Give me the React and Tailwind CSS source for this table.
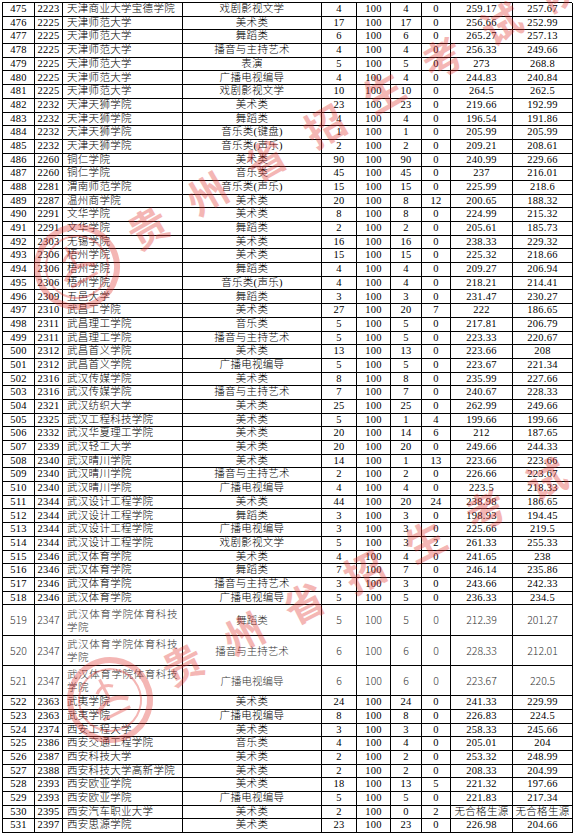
import React from "react";

const R = [
  [475, 2223, "天津商业大学宝德学院", "戏剧影视文学", "4", "100", "4", "0", "259.17", "257.67"],
  [476, 2225, "天津师范大学", "美术类", "17", "100", "17", "0", "256.66", "252.99"],
  [477, 2225, "天津师范大学", "舞蹈类", "6", "100", "6", "0", "265.27", "257.13"],
  [478, 2225, "天津师范大学", "播音与主持艺术", "4", "100", "4", "0", "256.33", "249.66"],
  [479, 2225, "天津师范大学", "表演", "5", "100", "5", "0", "273", "268.8"],
  [480, 2225, "天津师范大学", "广播电视编导", "4", "100", "4", "0", "244.83", "240.84"],
  [481, 2225, "天津师范大学", "戏剧影视文学", "10", "100", "10", "0", "264.5", "262.5"],
  [482, 2232, "天津天狮学院", "美术类", "23", "100", "23", "0", "219.66", "192.99"],
  [483, 2232, "天津天狮学院", "舞蹈类", "4", "100", "4", "0", "196.54", "191.86"],
  [484, 2232, "天津天狮学院", "音乐类(键盘)", "1", "100", "1", "0", "205.99", "205.99"],
  [485, 2232, "天津天狮学院", "音乐类(声乐)", "2", "100", "2", "0", "209.21", "208.61"],
  [486, 2260, "铜仁学院", "美术类", "90", "100", "90", "0", "240.99", "229.66"],
  [487, 2260, "铜仁学院", "音乐类", "45", "100", "45", "0", "237", "216.01"],
  [488, 2281, "渭南师范学院", "音乐类(声乐)", "15", "100", "15", "0", "225.99", "218.6"],
  [489, 2287, "温州商学院", "美术类", "20", "100", "8", "12", "200.65", "188.32"],
  [490, 2291, "文华学院", "美术类", "8", "100", "8", "0", "224.99", "215.32"],
  [491, 2291, "文华学院", "舞蹈类", "2", "100", "2", "0", "205.61", "185.73"],
  [492, 2303, "无锡学院", "美术类", "16", "100", "16", "0", "238.33", "229.32"],
  [493, 2306, "梧州学院", "美术类", "15", "100", "15", "0", "225.32", "218.66"],
  [494, 2306, "梧州学院", "舞蹈类", "4", "100", "4", "0", "209.27", "206.94"],
  [495, 2306, "梧州学院", "音乐类(声乐)", "4", "100", "4", "0", "218.21", "214.41"],
  [496, 2309, "五邑大学", "舞蹈类", "3", "100", "3", "0", "231.47", "230.27"],
  [497, 2310, "武昌工学院", "美术类", "27", "100", "20", "7", "222", "186.65"],
  [498, 2311, "武昌理工学院", "音乐类", "5", "100", "5", "0", "217.81", "206.79"],
  [499, 2311, "武昌理工学院", "播音与主持艺术", "5", "100", "5", "0", "223.33", "220.67"],
  [500, 2312, "武昌首义学院", "美术类", "13", "100", "13", "0", "223.66", "208"],
  [501, 2312, "武昌首义学院", "广播电视编导", "5", "100", "5", "0", "223.67", "221.34"],
  [502, 2316, "武汉传媒学院", "美术类", "8", "100", "8", "0", "235.99", "227.66"],
  [503, 2316, "武汉传媒学院", "播音与主持艺术", "7", "100", "7", "0", "240.67", "228.33"],
  [504, 2321, "武汉纺织大学", "美术类", "25", "100", "25", "0", "262.99", "249.66"],
  [505, 2325, "武汉工程科技学院", "美术类", "5", "100", "1", "4", "199.66", "199.66"],
  [506, 2332, "武汉华夏理工学院", "美术类", "20", "100", "14", "6", "212", "187.65"],
  [507, 2339, "武汉轻工大学", "美术类", "20", "100", "20", "0", "249.66", "244.33"],
  [508, 2340, "武汉晴川学院", "美术类", "14", "100", "1", "13", "223.66", "223.66"],
  [509, 2340, "武汉晴川学院", "播音与主持艺术", "2", "100", "2", "0", "226.66", "223.67"],
  [510, 2340, "武汉晴川学院", "广播电视编导", "4", "100", "4", "0", "223.5", "218.33"],
  [511, 2344, "武汉设计工程学院", "美术类", "44", "100", "20", "24", "238.98", "186.65"],
  [512, 2344, "武汉设计工程学院", "舞蹈类", "3", "100", "3", "0", "198.93", "194.45"],
  [513, 2344, "武汉设计工程学院", "广播电视编导", "3", "100", "3", "0", "225.66", "219.5"],
  [514, 2344, "武汉设计工程学院", "戏剧影视文学", "5", "100", "3", "2", "261.33", "255.33"],
  [515, 2346, "武汉体育学院", "美术类", "4", "100", "4", "0", "241.65", "238"],
  [516, 2346, "武汉体育学院", "舞蹈类", "7", "100", "7", "0", "246.14", "235.86"],
  [517, 2346, "武汉体育学院", "播音与主持艺术", "3", "100", "3", "0", "243.66", "242.33"],
  [518, 2346, "武汉体育学院", "广播电视编导", "5", "100", "5", "0", "236.33", "234.5"],
  [519, 2347, "TALL", "舞蹈类", "5", "100", "5", "0", "212.39", "201.27"],
  [520, 2347, "TALL", "播音与主持艺术", "6", "100", "6", "0", "228.33", "212.01"],
  [521, 2347, "TALL", "广播电视编导", "6", "100", "6", "0", "223.67", "220.5"],
  [522, 2363, "武夷学院", "美术类", "24", "100", "24", "0", "241.33", "229.99"],
  [523, 2363, "武夷学院", "广播电视编导", "8", "100", "8", "0", "226.83", "224.5"],
  [524, 2374, "西安工程大学", "美术类", "3", "100", "3", "0", "258.33", "245.66"],
  [525, 2386, "西安交通工程学院", "音乐类", "4", "100", "4", "0", "205.01", "204"],
  [526, 2387, "西安科技大学", "美术类", "2", "100", "2", "0", "253.32", "248.99"],
  [527, 2388, "西安科技大学高新学院", "美术类", "2", "100", "2", "0", "208.33", "204.99"],
  [528, 2393, "西安欧亚学院", "美术类", "18", "100", "13", "5", "221.32", "197.66"],
  [529, 2393, "西安欧亚学院", "广播电视编导", "5", "100", "5", "0", "221.83", "217.34"],
  [530, 2395, "西安汽车职业大学", "美术类", "2", "100", "0", "2", "无合格生源", "无合格生源"],
  [531, 2397, "西安思源学院", "美术类", "23", "100", "23", "0", "226.98", "204.66"],
];

const cell =
  "border-r border-b border-black flex items-center overflow-hidden whitespace-nowrap";

function Row({ r }) {
  const tall = r[2] === "TALL";
  const rowCls = tall
    ? "grid grid-cols-[32px_28px_120px_139px_35px_34px_31px_29px_62px_60px] h-[30.3px] font-['Noto_Sans_CJK_SC',sans-serif] font-light text-[10.5px] text-[#333] leading-[13px]"
    : "grid grid-cols-[32px_28px_120px_139px_35px_34px_31px_29px_62px_60px] h-[13.7px] font-['Liberation_Serif','Noto_Sans_CJK_SC',serif] font-light text-[10.5px] text-black leading-none tracking-[0.3px]";
  return (
    <div className={rowCls}>
      <div className={`${cell} justify-center`}>{r[0]}</div>
      <div className={`${cell} justify-center`}>{r[1]}</div>
      <div className={`${cell} justify-start pl-[4px]`}>
        {tall ? (
          <div className="flex flex-col tracking-[0.6px]">
            <span>武汉体育学院体育科技</span>
            <span>学院</span>
          </div>
        ) : (
          r[2]
        )}
      </div>
      <div className={`${cell} justify-center`}>{r[3]}</div>
      <div className={`${cell} justify-center`}>{r[4]}</div>
      <div className={`${cell} justify-center`}>{r[5]}</div>
      <div className={`${cell} justify-center`}>{r[6]}</div>
      <div className={`${cell} justify-center`}>{r[7]}</div>
      <div className={`${cell} justify-center`}>{r[8]}</div>
      <div className={`${cell} justify-center`}>{r[9]}</div>
    </div>
  );
}

function Emblem() {
  return (
    <svg width="90" height="90" viewBox="0 0 90 90" className="shrink-0">
      <circle cx="45" cy="45" r="40" fill="none" stroke="#e0302c" strokeWidth="6" />
      <circle cx="45" cy="45" r="31" fill="none" stroke="#e0302c" strokeWidth="2" />
      <path d="M28 52 Q45 38 62 52" fill="none" stroke="#e0302c" strokeWidth="4" />
      <path d="M30 60 L60 60" fill="none" stroke="#e0302c" strokeWidth="3" />
      <path d="M45 22 L45 46" fill="none" stroke="#e0302c" strokeWidth="3" />
      <path d="M36 34 Q45 26 54 34" fill="none" stroke="#e0302c" strokeWidth="3" />
    </svg>
  );
}

function Watermark({ pos }) {
  return (
    <div
      className={`absolute pointer-events-none flex items-center gap-[16px] opacity-35 whitespace-nowrap ${pos}`}
    >
      <Emblem />
      <span className="font-['Noto_Sans_CJK_SC',sans-serif] font-bold text-[40px] leading-none tracking-[28px] text-[#e0302c]">
        贵州省招生考试院
      </span>
    </div>
  );
}

export default function App() {
  return (
    <div className="relative w-[575px] h-[834px] bg-white overflow-hidden">
      <div className="ml-[2px] pt-[2px] w-[570px]">
        <div className="border-l border-t border-black">
          {R.map((r) => (
            <Row key={r[0]} r={r} />
          ))}
        </div>
      </div>
      <Watermark pos="left-[32px] top-[222px] origin-[45px_45px] rotate-[-30deg]" />
      <Watermark pos="left-[65px] top-[655px] origin-[45px_45px] rotate-[-27deg]" />
    </div>
  );
}
